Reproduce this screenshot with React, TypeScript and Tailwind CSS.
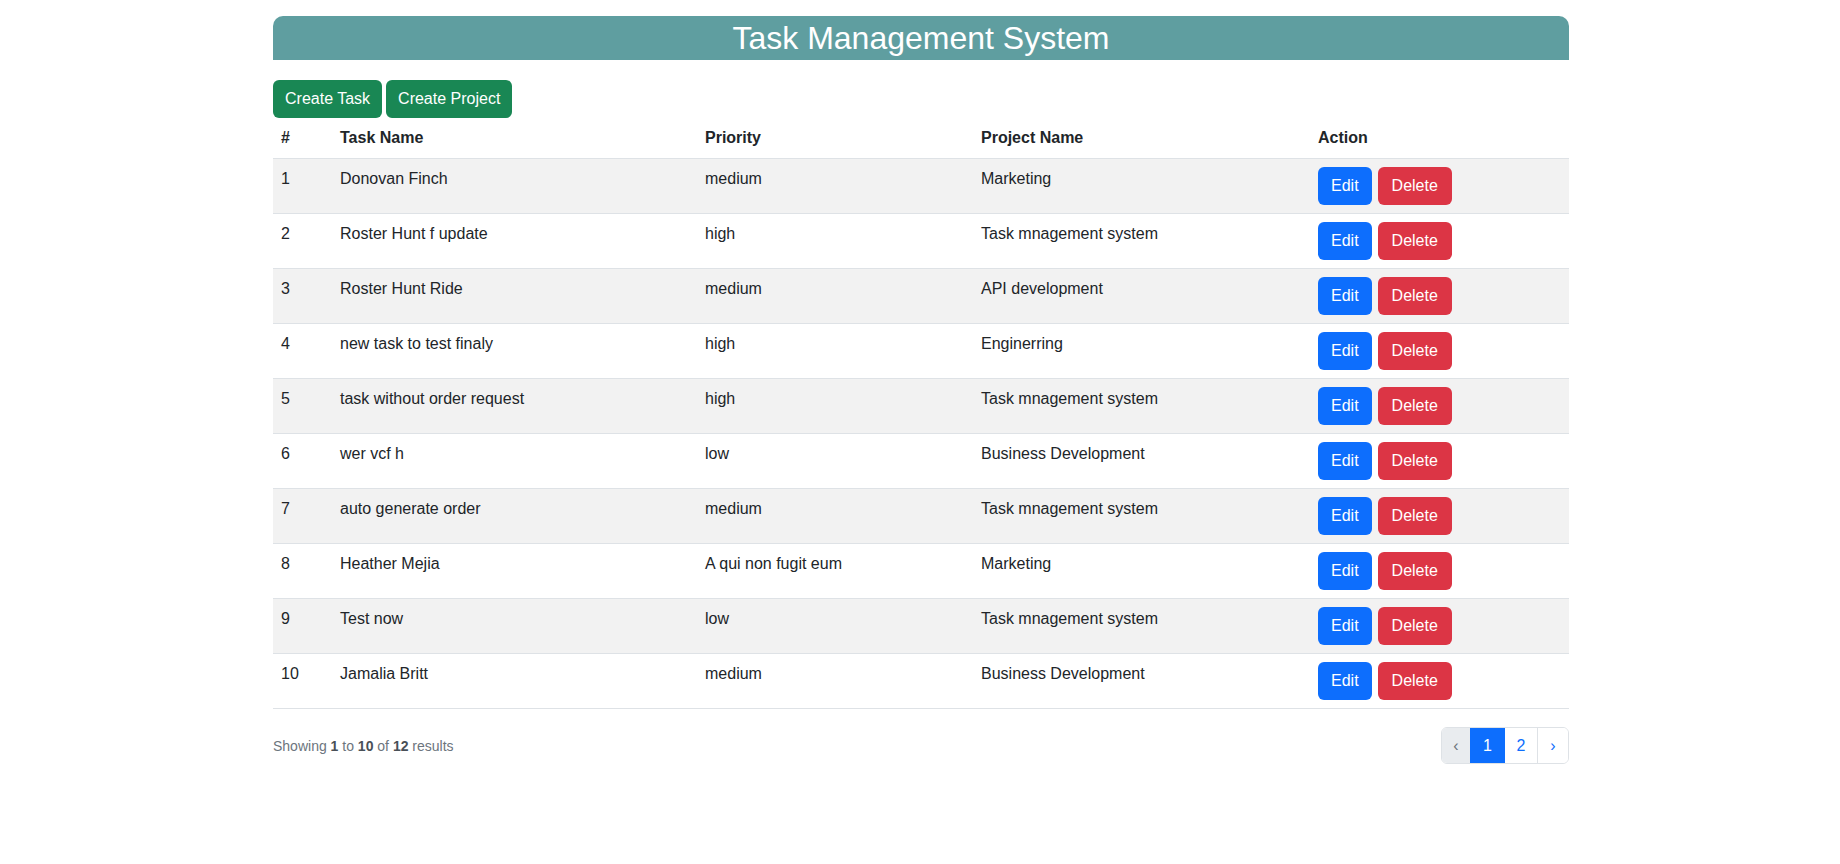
type Task = {
  id: number;
  name: string;
  priority: string;
  project: string;
};

const tasks: Task[] = [
  { id: 1, name: "Donovan Finch", priority: "medium", project: "Marketing" },
  { id: 2, name: "Roster Hunt f update", priority: "high", project: "Task mnagement system" },
  { id: 3, name: "Roster Hunt Ride", priority: "medium", project: "API development" },
  { id: 4, name: "new task to test finaly", priority: "high", project: "Enginerring" },
  { id: 5, name: "task without order request", priority: "high", project: "Task mnagement system" },
  { id: 6, name: "wer vcf h", priority: "low", project: "Business Development" },
  { id: 7, name: "auto generate order", priority: "medium", project: "Task mnagement system" },
  { id: 8, name: "Heather Mejia", priority: "A qui non fugit eum", project: "Marketing" },
  { id: 9, name: "Test now", priority: "low", project: "Task mnagement system" },
  { id: 10, name: "Jamalia Britt", priority: "medium", project: "Business Development" },
];

export default function App() {
  return (
    <div
      className="min-h-screen bg-white text-[#212529]"
      style={{ fontFamily: '"Liberation Sans", Arial, sans-serif' }}
    >
      <div className="mx-auto w-[1296px] translate-x-px pt-4">
        {/* Header */}
        <div className="h-[44px] rounded-t-[10px] bg-[#5f9ea0] text-center text-[32px] leading-[44px] text-white">
          Task Management System
        </div>

        {/* Action buttons */}
        <div className="mt-5 flex gap-1">
          <button className="h-[38px] rounded-md bg-[#198754] px-3 text-base text-white">
            Create Task
          </button>
          <button className="h-[38px] rounded-md bg-[#198754] px-3 text-base text-white">
            Create Project
          </button>
        </div>

        {/* Table */}
        <table className="w-full table-fixed border-collapse text-base">
          <colgroup>
            <col className="w-[59px]" />
            <col className="w-[365px]" />
            <col className="w-[276px]" />
            <col className="w-[337px]" />
            <col className="w-[259px]" />
          </colgroup>
          <thead>
            <tr className="border-b border-[#dee2e6] text-left">
              <th className="p-2 font-bold leading-6">#</th>
              <th className="p-2 font-bold leading-6">Task Name</th>
              <th className="p-2 font-bold leading-6">Priority</th>
              <th className="p-2 font-bold leading-6">Project Name</th>
              <th className="p-2 font-bold leading-6">Action</th>
            </tr>
          </thead>
          <tbody>
            {tasks.map((t, i) => (
              <tr
                key={t.id}
                className={`border-b border-[#dee2e6] ${i % 2 === 0 ? "bg-[#f2f2f2]" : "bg-white"}`}
              >
                <td className="p-2 align-top leading-6">{t.id}</td>
                <td className="p-2 align-top leading-6">{t.name}</td>
                <td className="p-2 align-top leading-6">{t.priority}</td>
                <td className="p-2 align-top leading-6">{t.project}</td>
                <td className="p-2 align-top">
                  <div className="flex gap-[6px]">
                    <button className="h-[38px] rounded-md bg-[#0d6efd] px-[13px] text-white">
                      Edit
                    </button>
                    <button className="h-[38px] rounded-md bg-[#dc3545] px-[14px] text-white">
                      Delete
                    </button>
                  </div>
                </td>
              </tr>
            ))}
          </tbody>
        </table>

        {/* Footer / pagination */}
        <div className="mt-[18px] flex items-center justify-between">
          <p className="text-sm text-[#6c757d]">
            Showing <span className="font-bold text-[#495057]">1</span> to{" "}
            <span className="font-bold text-[#495057]">10</span> of{" "}
            <span className="font-bold text-[#495057]">12</span> results
          </p>
          <div className="flex h-[37px] overflow-hidden rounded-md border border-[#dee2e6] text-base">
            <span className="flex w-[28px] items-center justify-center bg-[#e9ecef] text-[#6c757d]">
              ‹
            </span>
            <span className="flex w-[35px] items-center justify-center bg-[#0d6efd] text-white">
              1
            </span>
            <span className="flex w-[32px] items-center justify-center bg-white text-[#0d6efd]">
              2
            </span>
            <span className="flex w-[31px] items-center justify-center border-l border-[#dee2e6] bg-white text-[#0d6efd]">
              ›
            </span>
          </div>
        </div>
      </div>
    </div>
  );
}
